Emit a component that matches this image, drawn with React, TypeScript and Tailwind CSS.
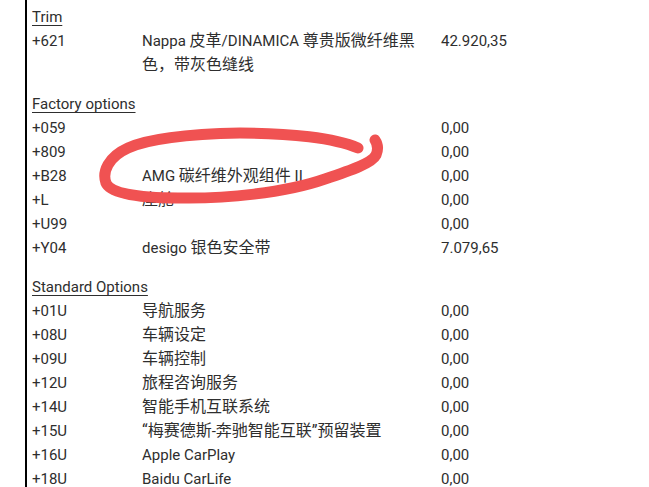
import React from 'react';

type Row = { code: string; desc: string; price: string };

const trim: Row[] = [
  { code: '+621', desc: 'Nappa 皮革/DINAMICA 尊贵版微纤维黑\n色，带灰色缝线', price: '42.920,35' },
];

const factory: Row[] = [
  { code: '+059', desc: '', price: '0,00' },
  { code: '+809', desc: '', price: '0,00' },
  { code: '+B28', desc: 'AMG 碳纤维外观组件 II', price: '0,00' },
  { code: '+L', desc: '座舱', price: '0,00' },
  { code: '+U99', desc: '', price: '0,00' },
  { code: '+Y04', desc: 'desigo 银色安全带', price: '7.079,65' },
];

const standard: Row[] = [
  { code: '+01U', desc: '导航服务', price: '0,00' },
  { code: '+08U', desc: '车辆设定', price: '0,00' },
  { code: '+09U', desc: '车辆控制', price: '0,00' },
  { code: '+12U', desc: '旅程咨询服务', price: '0,00' },
  { code: '+14U', desc: '智能手机互联系统', price: '0,00' },
  { code: '+15U', desc: '“梅赛德斯-奔驰智能互联”预留装置', price: '0,00' },
  { code: '+16U', desc: 'Apple CarPlay', price: '0,00' },
  { code: '+18U', desc: 'Baidu CarLife', price: '0,00' },
];

// chinese runs are set a touch larger than the latin ones, like the source pdf
const Line = ({ text }: { text: string }) => {
  const parts = text.split(/([\u3000-\u9fff\uff00-\uffef“”]+)/).filter(Boolean);
  return (
    <div className="whitespace-pre">
      {parts.map((p, i) =>
        /[\u3000-\u9fff\uff00-\uffef]/.test(p) ? (
          <span key={i} className="text-[16px]">{p}</span>
        ) : (
          <span key={i}>{p}</span>
        ),
      )}
    </div>
  );
};

const Section = ({ title, rows, first }: { title: string; rows: Row[]; first?: boolean }) => (
  <div className={first ? '' : 'mt-[15px]'}>
    <div className="h-6 underline underline-offset-[3px] decoration-1">{title}</div>
    {rows.map((r) => (
      <div key={r.code} className="grid grid-cols-[110px_299px_auto]">
        <div>{r.code}</div>
        <div className="min-h-6">
          {r.desc.split('\n').map((l, i) => (
            <Line key={i} text={l} />
          ))}
        </div>
        <div>{r.price}</div>
      </div>
    ))}
  </div>
);

export default function App() {
  return (
    <div
      className="relative h-[487px] w-[649px] overflow-hidden bg-white text-[15px] leading-6 text-[#2e2e2e]"
      style={{ fontFamily: 'Roboto, "Noto Sans CJK SC", sans-serif' }}
    >
      <div className="ml-[25px] h-full border-l-2 border-black pl-[5px] pt-[5px]">
        <Section title="Trim" rows={trim} first />
        <Section title="Factory options" rows={factory} />
        <Section title="Standard Options" rows={standard} />
      </div>
      {/* red marker scribble over the AMG row */}
      <svg className="absolute left-0 top-0" width="649" height="487" viewBox="0 0 649 487">
        <path
          d="M358 148 C 335 138, 290 133, 240 133 C 190 134, 150 138, 128 148 C 108 157, 102 172, 106 183 C 110 193, 135 198, 178 198 C 225 199, 285 193, 325 179 C 352 170, 372 163, 376 155 C 379 148, 377 143, 375 140"
          fill="none"
          stroke="#f05252"
          strokeWidth="11"
          strokeLinecap="round"
          strokeLinejoin="round"
        />
      </svg>
    </div>
  );
}
